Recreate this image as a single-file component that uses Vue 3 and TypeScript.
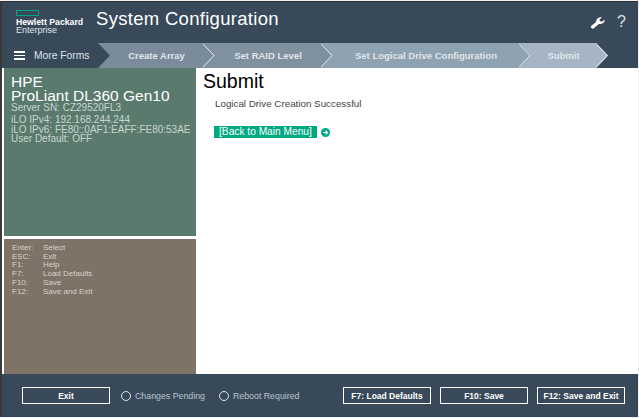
<script setup lang="ts">
type Step = { label: string; width: number; color: string }
type Key = { key: string; action: string }

const steps: Step[] = [
  { label: 'Create Array', width: 117, color: '#7a8c9b' },
  { label: 'Set RAID Level', width: 130, color: '#7f909f' },
  { label: 'Set Logical Drive Configuration', width: 210, color: '#8fa2b1' },
  { label: 'Submit', width: 89, color: '#a5b5c5' }
]

const keys: Key[] = [
  { key: 'Enter:', action: 'Select' },
  { key: 'ESC:', action: 'Exit' },
  { key: 'F1:', action: 'Help' },
  { key: 'F7:', action: 'Load Defaults' },
  { key: 'F10:', action: 'Save' },
  { key: 'F12:', action: 'Save and Exit' }
]

const footerButtons = ['F7: Load Defaults', 'F10: Save', 'F12: Save and Exit']
</script>

<template>
  <div class="screen">
    <header class="top">
      <div class="brand">
        <div class="logo-box"></div>
        <div class="logo-bold">Hewlett Packard</div>
        <div class="logo-light">Enterprise</div>
      </div>
      <h1 class="title">System Configuration</h1>
      <div class="top-icons">
        <svg class="wrench" width="15" height="13" viewBox="0 0 16 16" preserveAspectRatio="none">
          <path d="M3 13.500 9 7.500" stroke="#fff" stroke-width="4" stroke-linecap="round" />
          <path d="M6.500 7.500C6.500 4 8.500 1.500 12.800 1.500L10 4.500 10.800 6.500 12.800 7 15.500 4.300C15.800 8 13.500 10 9.500 9.800Z" fill="#fff" />
        </svg>
        <span class="help">?</span>
      </div>
    </header>

    <nav class="nav">
      <div class="more">
        <span class="burger"><i></i><i></i><i></i></span>
        <span>More Forms</span>
      </div>
      <div
        v-for="step in steps"
        :key="step.label"
        class="step"
        :style="{ width: step.width + 'px', background: step.color }"
      >
        <span>{{ step.label }}</span>
        <svg class="chev" width="12" height="25" viewBox="0 0 12 25">
          <path d="M0 0 12 12.500 0 25" fill="none" stroke="#dde3e8" stroke-width="2.200" />
        </svg>
      </div>
    </nav>

    <main class="middle">
      <aside class="side">
        <section class="info">
          <div class="model">HPE</div>
          <div class="model">ProLiant DL360 Gen10</div>
          <div class="serial">Server SN: CZ29520FL3</div>
          <div class="ilo">
            <div>iLO IPv4: 192.168.244.244</div>
            <div>iLO IPv6: FE80::0AF1:EAFF:FE80:53AE</div>
            <div>User Default: OFF</div>
          </div>
        </section>
        <section class="keys">
          <div v-for="row in keys" :key="row.key" class="key-row">
            <span class="key">{{ row.key }}</span>
            <span>{{ row.action }}</span>
          </div>
        </section>
      </aside>

      <section class="content">
        <h2 class="page-title">Submit</h2>
        <p class="message">Logical Drive Creation Successful</p>
        <div class="back">
          <a class="back-link">[Back to Main Menu]</a>
          <svg width="9" height="9" viewBox="0 0 9 9">
            <circle cx="4.500" cy="4.500" r="4.500" fill="#01a982" />
            <path d="M2 4.500H6.500M4.700 2.700 6.500 4.500 4.700 6.300" fill="none" stroke="#fff" stroke-width="1.100" />
          </svg>
        </div>
      </section>
    </main>

    <footer class="bottom">
      <button class="btn exit">Exit</button>
      <div class="status"><i class="dot"></i>Changes Pending</div>
      <div class="status second"><i class="dot"></i>Reboot Required</div>
      <div class="right-btns">
        <button v-for="label in footerButtons" :key="label" class="btn">{{ label }}</button>
      </div>
    </footer>
  </div>
</template>

<style>
html,
body {
  margin: 0;
  background: #f1f1f1;
}
</style>

<style scoped>
.screen {
  width: 638px;
  height: 416px;
  margin-top: 1px;
  border-left: 2px solid #3a3a3a;
  border-top: 1px solid #2b3540;
  box-sizing: border-box;
  display: flex;
  flex-direction: column;
  font-family: "Liberation Sans", Arial, sans-serif;
  background: #384a5a;
  overflow: hidden;
}

.top {
  height: 41px;
  flex: none;
  display: flex;
  align-items: flex-start;
  color: #fff;
}

.brand {
  width: 94px;
  padding: 8px 0 0 14px;
  box-sizing: border-box;
  font-size: 8.700px;
  line-height: 8px;
}

.logo-box {
  width: 23px;
  height: 6px;
  box-sizing: border-box;
  border: 1.500px solid #01a982;
  margin-bottom: 2px;
}

.logo-bold {
  font-weight: 700;
  white-space: nowrap;
}

.logo-light {
  font-size: 9px;
  color: #dfe4e8;
}

.title {
  margin: 4px 0 0;
  font-size: 18.500px;
  line-height: 26px;
  font-weight: 400;
  letter-spacing: 0.3px;
  white-space: nowrap;
}

.top-icons {
  margin-left: auto;
  display: flex;
  align-items: center;
  gap: 12px;
  padding: 12px 12px 0 0;
}

.wrench {
  display: block;
}

.help {
  font-size: 16px;
  line-height: 16px;
  color: #dbe0e4;
}

.nav {
  height: 25px;
  flex: none;
  display: flex;
  font-size: 9.500px;
  color: #dfe5ea;
}

.more {
  width: 96px;
  flex: none;
  display: flex;
  align-items: center;
  gap: 9px;
  padding-left: 12px;
  box-sizing: border-box;
  font-size: 10.300px;
  color: #dde2e6;
}

.burger {
  display: flex;
  flex-direction: column;
  gap: 2px;
}

.burger i {
  display: block;
  width: 11px;
  height: 1.500px;
  background: #fff;
}

.step {
  position: relative;
  flex: none;
  display: flex;
  align-items: center;
  justify-content: center;
  box-sizing: border-box;
  white-space: nowrap;
  font-weight: 700;
  clip-path: polygon(0 0, calc(100% - 12px) 0, 100% 50%, calc(100% - 12px) 100%, 0 100%, 12px 50%);
}

.step + .step {
  margin-left: -12px;
}

.chev {
  position: absolute;
  right: 0;
  top: 0;
}

.middle {
  flex: 1;
  display: flex;
  background: #fff;
  min-height: 0;
}

.side {
  width: 194px;
  flex: none;
  padding-left: 2px;
  display: flex;
  flex-direction: column;
  gap: 3px;
  box-sizing: border-box;
  background: #fff;
}

.info {
  height: 168px;
  flex: none;
  background: #5a7a6e;
  padding: 7px 0 7px 7px;
  box-sizing: border-box;
  color: #c9d6d0;
  font-size: 10px;
  line-height: 9.500px;
  white-space: nowrap;
}

.model {
  font-size: 15.500px;
  line-height: 14px;
  color: #fff;
}

.serial {
  line-height: 10px;
}

.ilo {
  margin-top: 2px;
}

.keys {
  flex: 1;
  background: #7f7267;
  padding: 5px 8px;
  color: #d8d2cc;
  font-size: 8px;
  line-height: 8.700px;
}

.key-row {
  display: flex;
}

.key {
  width: 31px;
  flex: none;
}

.content {
  flex: 1;
  padding-left: 7px;
  color: #000;
}

.page-title {
  margin: 3px 0 0;
  font-size: 19.500px;
  line-height: 20px;
  font-weight: 400;
}

.message {
  margin: 8px 0 0 12px;
  font-size: 9.800px;
  line-height: 10px;
  color: #444;
}

.back {
  margin: 17px 0 0 11px;
  display: flex;
  align-items: center;
  gap: 4px;
}

.back-link {
  background: #01a982;
  color: #fff;
  font-size: 10.200px;
  line-height: 12px;
  padding: 0 5px;
  white-space: nowrap;
}

.bottom {
  height: 43px;
  flex: none;
  display: flex;
  align-items: center;
  padding: 0 13px 0 20px;
  box-sizing: border-box;
  color: #b9c3cb;
  font-size: 8.800px;
}

.btn {
  width: 88px;
  height: 17px;
  box-sizing: border-box;
  border: 1px solid #fff;
  background: #384a5a;
  color: #fff;
  font-family: inherit;
  font-size: 8.500px;
  font-weight: 700;
  padding: 0;
  white-space: nowrap;
}

.status {
  display: flex;
  align-items: center;
  gap: 4px;
  margin-left: 11px;
}

.status.second {
  margin-left: 14px;
}

.dot {
  width: 10px;
  height: 10px;
  box-sizing: border-box;
  border: 1px solid #dfe4e8;
  border-radius: 50%;
}

.right-btns {
  margin-left: auto;
  display: flex;
  gap: 9px;
}
</style>
